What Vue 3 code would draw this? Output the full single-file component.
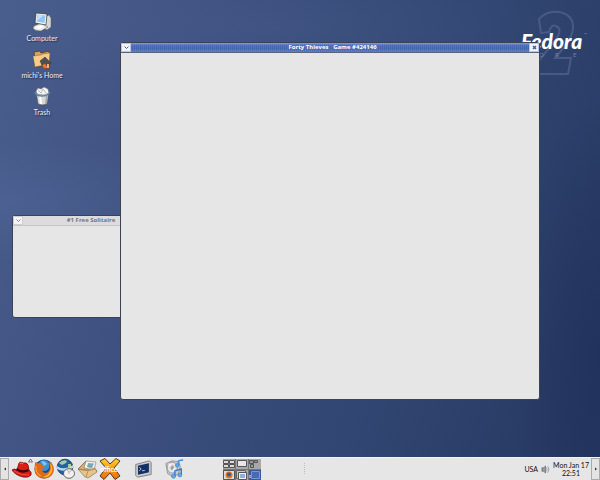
<script setup>
const emptyCells = ['grid', 'single', 'corner']
</script>

<template>
  <div class="screen">
    <main class="desktop">
      <svg class="brand" viewBox="0 0 90 80" role="img" aria-label="Fedora Core 2">
        <path d="M31 33 L29 19 Q37 10 49 12 Q64 15 63 29 Q62 38 51 51 L45 58 H61 L58 74 H29 V61 L46 39 Q53 29 46 26 Q41 24 39 32 Z" fill="none" stroke="#50638f" stroke-width="2" opacity=".75" />
        <text x="11" y="49" class="wordmark">Fedora</text>
        <text x="15" y="57" class="core">C</text>
        <text x="29" y="57" class="core">O</text>
        <text x="45" y="57" class="core">R</text>
        <text x="63" y="57" class="core">E</text>
        <text x="74" y="36" class="tm">™</text>
      </svg>

      <nav class="shortcuts" aria-label="Desktop">
        <a href="#computer" class="shortcut">
          <svg viewBox="0 0 20 20" aria-hidden="true">
            <path d="M12 5 L17 3 L19 6 V15 L15 18 L11 16 Z" fill="#d7d9d9" stroke="#555" stroke-width=".5" />
            <path d="M2 14 L9 11 L16 15 L9 19 Q2 19 1 16 Z" fill="#e8e8e4" stroke="#555" stroke-width=".5" />
            <path d="M4 1 L15 2 L14 13 L3 11 Z" fill="#f4f4f0" stroke="#333" stroke-width=".7" />
            <path d="M5.500 2.500 L13.500 3.500 L12.500 11 L4.500 9.500 Z" fill="#91c5f3" />
            <path d="M6 3 L11 3.500 L5 9 Z" fill="#c4e3ff" />
            <path d="M3 15 L9 13 L12 15 L7 17 Z" fill="#fff" />
          </svg>
          <span>Computer</span>
        </a>
        <a href="#home" class="shortcut">
          <svg viewBox="0 0 20 20" aria-hidden="true">
            <path d="M2 3 L8 2 L9 4 L17 2 L18 15 L4 18 Z" fill="#d9a258" stroke="#493822" stroke-width=".8" />
            <path d="M1 7 L9 6 L11 5 L18 4 L17 15 L3 18 Z" fill="#f5cc8a" stroke="#705426" stroke-width=".4" />
            <path d="M10 13 H17 V19 L12 20 L10 17 Z" fill="#e5762b" stroke="#713014" stroke-width=".6" />
            <path d="M8 12 L13 8 L19 14 L15 17 L13 14 L10 16 Z" fill="#505053" stroke="#333" stroke-width=".5" />
            <path d="M15 15 H17 V19 H15 Z" fill="#f9b064" />
          </svg>
          <span>michi's Home</span>
        </a>
        <a href="#trash" class="shortcut">
          <svg viewBox="0 0 20 20" aria-hidden="true">
            <path d="M4 6 L6 18 Q10 20 15 18 L17 6 Z" fill="#d8d9d8" stroke="#444" stroke-width=".6" />
            <path d="M7 9 L8 18 H10 L9 9 Z" fill="#fff" />
            <path d="M14 9 L13 18 L15 17 L16 9 Z" fill="#a9a9a9" />
            <path d="M4 5 L6 2 L9 3 L12 1 L16 3 L17 7 L12 9 L5 8 Z" fill="#f4f4f4" stroke="#666" stroke-width=".5" />
            <path d="M6 4 L9 7 L11 3 L14 7" fill="none" stroke="#aaa" stroke-width=".8" />
            <path d="M3 6 Q4 10 10 10 Q16 10 18 6" fill="none" stroke="#5f86a8" stroke-width="1.500" />
          </svg>
          <span>Trash</span>
        </a>
      </nav>

      <section class="window solitaire" aria-label="#1 Free Solitaire">
        <header class="titlebar">
          <button type="button" class="win-button" aria-label="Window menu">
            <svg viewBox="0 0 9 9" aria-hidden="true"><path d="M2.500 3.500 L4.500 5.500 L6.500 3.500" fill="none" stroke="currentColor" /></svg>
          </button>
          <h2>#1 Free Solitaire</h2>
          <button type="button" class="win-button" aria-label="Close">
            <svg viewBox="0 0 9 9" aria-hidden="true"><path d="M3 3 L6 6 M6 3 L3 6" fill="none" stroke="currentColor" stroke-width="1.500" /></svg>
          </button>
        </header>
      </section>

      <section class="window active thieves" aria-label="Forty Thieves">
        <header class="titlebar">
          <button type="button" class="win-button" aria-label="Window menu">
            <svg viewBox="0 0 9 9" aria-hidden="true"><path d="M2.500 3.500 L4.500 5.500 L6.500 3.500" fill="none" stroke="currentColor" /></svg>
          </button>
          <h1>Forty Thieves&nbsp;&nbsp; Game #424146</h1>
          <button type="button" class="win-button" aria-label="Close">
            <svg viewBox="0 0 9 9" aria-hidden="true"><path d="M3 3 L6 6 M6 3 L3 6" fill="none" stroke="currentColor" stroke-width="1.500" /></svg>
          </button>
        </header>
      </section>
    </main>

    <footer class="panel">
      <button type="button" class="hide" aria-label="Hide panel left">
        <svg viewBox="0 0 4 4" aria-hidden="true"><path d="M3 0.500 V3.500 L1 2 Z" fill="#333" /></svg>
      </button>

      <div class="launchers">
        <button type="button" class="launcher" aria-label="Main menu">
          <svg viewBox="0 0 22 22" aria-hidden="true">
            <path d="M1 12 Q3 10 6 12 L8 5 Q10 3 12 5 Q16 4 17 7 L18 12 Q21 14 20 17 Q18 20 12 19 Q4 17 1 12 Z" fill="#e21b17" stroke="#6f100e" stroke-width=".8" />
            <path d="M6 10 Q11 14 17 11 L18 13 Q11 17 5 12 Z" fill="#3a0c0c" />
            <path d="M9 6 Q10 4 12 6" fill="none" stroke="#ff685c" stroke-width="1.200" />
            <path d="M3 13 Q10 18 18 17" fill="none" stroke="#ff473c" />
            <path d="M17.500 4 L19.500 1 L21.500 4 Z" fill="#eee" stroke="#444" stroke-width=".7" />
          </svg>
        </button>
        <button type="button" class="launcher" aria-label="Firefox">
          <svg viewBox="0 0 22 22" aria-hidden="true">
            <circle cx="11" cy="11" r="9.500" fill="#174694" />
            <circle cx="11" cy="7.500" r="5.500" fill="#3c91d0" />
            <path d="M8 3 Q12 3 14 6 L11 8 Z" fill="#80c8ed" />
            <path d="M2 5 Q3 3 4 5 Q7 5 9 7 L12 9 L9 11 Q9 15 13 15 Q17 14 17 8 L16 3 Q22 7 20.500 14 Q18 21 10 20.500 Q1 19 1.500 10 Z" fill="#e36a15" />
            <path d="M17 5 Q22 11 17 17 Q14 20 10 19 Q17 17 18 10 Z" fill="#fdbb2d" />
            <path d="M3 8 Q2 15 8 18" fill="none" stroke="#ff9c2b" stroke-width="1.200" />
          </svg>
        </button>
        <button type="button" class="launcher" aria-label="Web browser">
          <svg viewBox="0 0 22 22" aria-hidden="true">
            <circle cx="10" cy="9" r="7.800" fill="#2462a6" stroke="#17324e" stroke-width=".8" />
            <path d="M4 5 Q8 1 12 3 L11 5 L7 7 Z M13 6 L16 6 L16 9 L13 10 Z" fill="#a5cf9a" />
            <path d="M2 8 Q8 13 18 7 L18 10 Q9 15 2 11 Z" fill="#b9d7ee" />
            <ellipse cx="14" cy="15.500" rx="5.500" ry="4.800" fill="#f1f1ee" stroke="#444" stroke-width=".8" />
            <path d="M12 12 L14 14 L17 12 M14 14 V16" fill="none" stroke="#999" stroke-width=".7" />
          </svg>
        </button>
        <button type="button" class="launcher" aria-label="Mail">
          <svg viewBox="0 0 22 22" aria-hidden="true">
            <path d="M1 11 L9 3 L20 13 L12 19 Z" fill="#d8ad72" stroke="#725830" stroke-width=".7" />
            <path d="M9 3 L19 4 L17 12 L7 10 Z" fill="#f4f5f2" stroke="#777" stroke-width=".6" />
            <path d="M11 5 L17 5.500 L15 10 L10 9 Z" fill="#76a8ca" />
            <path d="M10 9 L13 7 L15 10 Z" fill="#85a878" />
            <path d="M1 11 L10 12 L18 10 L20 14 L11 20 L8 19 Z" fill="#e7c48c" stroke="#8b6c3e" stroke-width=".6" />
            <path d="M1 11 Q11 14 18 11 M9 19 L11 13" fill="none" stroke="#a17c49" stroke-width=".7" />
          </svg>
        </button>
        <button type="button" class="launcher" aria-label="Office">
          <svg viewBox="0 0 22 22" aria-hidden="true">
            <defs>
              <linearGradient id="office-fill" x1="0" y1="0" x2="0" y2="1">
                <stop offset="0" stop-color="#ffd42a" />
                <stop offset="0.500" stop-color="#f79a14" />
                <stop offset="1" stop-color="#ec6a12" />
              </linearGradient>
            </defs>
            <path d="M1 3 L6 0.500 L11 6 L17 0.500 L21 3 L15 10 L21 18 L16 21.500 L11 15 L5 21.500 L1 18 L7 10 Z" fill="url(#office-fill)" stroke="#4a2a10" stroke-width=".9" />
            <text x="1" y="14" class="office-label">office</text>
          </svg>
        </button>
      </div>

      <button type="button" class="launcher terminal" aria-label="Terminal">
        <svg viewBox="0 0 22 22" aria-hidden="true">
          <path d="M3 6 L18 2 L20 4 V17 L5 20 L3 18 Z" fill="#c9cac7" stroke="#666" stroke-width=".8" />
          <path d="M5 7 L18 4 V15 L5 18 Z" fill="#142f62" stroke="#eee" stroke-width=".7" />
          <path d="M7 9 L9 11 L7 13 M10 13 L13 12.500" fill="none" stroke="#dfe8ff" stroke-width=".9" />
        </svg>
      </button>
      <button type="button" class="launcher music" aria-label="Music player">
        <svg viewBox="0 0 22 22" aria-hidden="true">
          <path d="M2 5 L9 2 L16 3 L18 8 L16 17 L9 19 L4 16 Z" fill="#c7c9c9" stroke="#777" stroke-width=".7" />
          <ellipse cx="9" cy="9.500" rx="5.500" ry="6" fill="#e6e6e6" stroke="#888" stroke-width=".8" />
          <ellipse cx="9" cy="9.500" rx="2" ry="2.500" fill="#9fa2a4" />
          <path d="M5 5 L8 8 M10 11 L13 14" stroke="#fff" stroke-width="1.200" />
          <path d="M16 7 V2 L21 1" fill="none" stroke="#4c98df" stroke-width="1.800" />
          <circle cx="14.500" cy="7" r="2" fill="#5faaf0" stroke="#2d669c" stroke-width=".5" />
          <path d="M12 19 V13 L19 11 V17" fill="none" stroke="#377fc8" stroke-width="1.600" />
          <circle cx="10.500" cy="19" r="2.200" fill="#5faaf0" stroke="#2d669c" stroke-width=".5" />
          <circle cx="17.500" cy="17.500" r="2.200" fill="#5faaf0" stroke="#2d669c" stroke-width=".5" />
        </svg>
      </button>

      <div class="pager" role="group" aria-label="Workspaces">
        <button v-for="(kind, i) in emptyCells" :key="kind" type="button" class="cell" :aria-label="`Workspace ${i + 1}`">
          <svg viewBox="0 0 12 10" aria-hidden="true">
            <path v-if="kind === 'grid'" d="M0.500 1.500 H5.500 V4.500 H0.500 Z M6.500 1.500 H11.500 V4.500 H6.500 Z M0.500 5.500 H5.500 V8.500 H0.500 Z M6.500 5.500 H11.500 V8.500 H6.500 Z" fill="#ddd" stroke="#555" />
            <path v-else-if="kind === 'single'" d="M1.500 1.500 H10.500 V7.500 H1.500 Z" fill="#e6e6e6" stroke="#555" />
            <path v-else d="M0.500 1.500 H4.500 V4.500 H0.500 Z M5.500 1.500 H8.500 V3.500 H5.500 Z M1.500 5.500 H4.500 V8.500 H1.500 Z" fill="#999" stroke="#555" />
          </svg>
        </button>
        <button type="button" class="cell" aria-label="Workspace 4">
          <svg viewBox="0 0 12 10" aria-hidden="true">
            <path d="M0.500 0.500 H11.500 V9.500 H0.500 Z" fill="#ddd" stroke="#555" />
            <circle cx="6" cy="5" r="3.500" fill="#e47621" /><circle cx="6" cy="4.500" r="2" fill="#285da3" />
          </svg>
        </button>
        <button type="button" class="cell" aria-label="Workspace 5">
          <svg viewBox="0 0 12 10" aria-hidden="true">
            <path d="M0.500 0.500 H9.500 V8.500 H0.500 Z" fill="#c8c8c8" stroke="#666" />
            <path d="M2.500 2.500 H10.500 V9.500 H2.500 Z" fill="#f2f2f2" stroke="#555" />
            <path d="M4 4 H9 V8 H4 Z" fill="#8fb0d8" />
          </svg>
        </button>
        <button type="button" class="cell current" aria-label="Workspace 6">
          <svg viewBox="0 0 12 10" aria-hidden="true">
            <path d="M0.500 5.500 H3 V7.500 H0.500 Z" fill="#5875b4" stroke="#cbd6ec" stroke-width=".7" />
            <path d="M2.500 1.500 H10.500 V8.500 H2.500 Z" fill="#4869b4" stroke="#7e95cc" />
          </svg>
        </button>
      </div>

      <div class="handle" aria-hidden="true"></div>

      <div class="tray">
        <span class="layout">USA</span>
        <button type="button" class="volume" aria-label="Volume">
          <svg viewBox="0 0 10 10" aria-hidden="true">
            <path d="M1 3 H3 L5 1 V9 L3 7 H1 Z" fill="#999" stroke="#555" stroke-width=".6" />
            <path d="M6 3 Q7.500 5 6 7 M7.500 1.500 Q10 5 7.500 8.500" fill="none" stroke="#8294aa" stroke-width=".9" />
          </svg>
        </button>
        <time class="clock" datetime="22:51">Mon Jan 17<br>22:51</time>
      </div>
      <button type="button" class="hide" aria-label="Hide panel right">
        <svg viewBox="0 0 4 4" aria-hidden="true"><path d="M1 0.500 V3.500 L3 2 Z" fill="#333" /></svg>
      </button>
    </footer>
  </div>
</template>

<style>
body {
  margin: 0;
}
</style>

<style scoped>
.screen {
  display: flex;
  flex-direction: column;
  min-height: 100vh;
  font-family: Lato, "Open Sans", sans-serif;
  font-size: 7px;
  line-height: 8px;
}

svg {
  display: block;
}

button {
  margin: 0;
  padding: 0;
  border: 0;
  background: none;
  font: inherit;
}

.desktop {
  position: relative;
  flex: 1;
  overflow: hidden;
  background:
    radial-gradient(ellipse 90px 260px at 100% 78%, rgba(20, 34, 76, 0.3), transparent),
    radial-gradient(ellipse 220px 60px at 0% 44%, rgba(90, 114, 164, 0.3), transparent),
    radial-gradient(ellipse 320px 60px at 45% 6%, rgba(84, 104, 150, 0.2), transparent),
    linear-gradient(108deg, #4a5e8d 0%, #3d5080 32%, #314672 65%, #263861 100%);
}

.brand {
  position: absolute;
  top: 0;
  right: 0;
  width: 90px;
  height: 80px;
}

.wordmark {
  font: italic 900 21px Lato, "Open Sans", sans-serif;
  fill: #fff;
}

.core {
  font-size: 6px;
  fill: #7383a8;
}

.tm {
  font-size: 4px;
  fill: #8291b3;
}

.shortcuts {
  display: flex;
  flex-direction: column;
  align-items: center;
  gap: 6px;
  width: 60px;
  padding: 12px;
}

.shortcut {
  display: flex;
  flex-direction: column;
  align-items: center;
  gap: 1px;
  color: #e9edf5;
  text-decoration: none;
  text-shadow: 1px 1px 1px #1e2b4c;
  line-height: 10px;
}

.shortcut svg {
  width: 20px;
  height: 20px;
}

.window {
  position: absolute;
  box-sizing: border-box;
  border: 1px solid #3b4254;
  border-radius: 3px;
  background: #e6e6e6;
  overflow: hidden;
}

.solitaire {
  top: 215px;
  left: 12px;
  width: 158px;
  height: 103px;
}

.thieves {
  inset: 42px 60px 57px 120px;
}

.titlebar {
  display: flex;
  align-items: center;
  height: 9px;
  border-bottom: 1px solid #c6c4c6;
  background: #dedbdf;
  color: #777;
}

.titlebar h1,
.titlebar h2 {
  flex: 1;
  margin: 0;
  font-family: "Open Sans", "Noto Sans", sans-serif;
  font-size: 6px;
  line-height: 9px;
  font-weight: 700;
  text-align: center;
  white-space: nowrap;
}

.titlebar h1 {
  padding-left: 5px;
}

.active .titlebar {
  border-color: #59647c;
  background:
    repeating-linear-gradient(90deg, rgba(255, 255, 255, 0.08) 0 1px, transparent 1px 2px),
    linear-gradient(#7f9ad6, #4b6bb8 25%, #4363ae 60%, #5878c2);
  color: #fff;
}

.win-button {
  display: flex;
  align-items: center;
  justify-content: center;
  width: 10px;
  height: 9px;
  background: #f5f5f5;
  box-shadow: inset 0 0 0 1px #d0ced2;
  color: #888;
}

.win-button svg {
  width: 9px;
  height: 9px;
}

.active .win-button {
  background: #f2f4fb;
  box-shadow: inset 0 0 0 1px #b9c5e4;
  color: #4a5c94;
}

.panel {
  display: flex;
  align-items: center;
  box-sizing: border-box;
  height: 23px;
  border-top: 1px solid #f4f4f4;
  background: #e6e6e6;
  color: #111;
}

.hide {
  display: flex;
  align-items: center;
  justify-content: center;
  align-self: stretch;
  box-sizing: border-box;
  width: 9px;
  border: 1px solid #aaa;
  background: #e4e4e4;
}

.hide svg {
  width: 4px;
  height: 4px;
}

.launchers {
  display: flex;
  padding-left: 2px;
}

.launcher svg {
  width: 22px;
  height: 22px;
}

.office-label {
  font-size: 7px;
  font-weight: 700;
  fill: #fff;
}

.terminal svg,
.music svg {
  width: 20px;
  height: 20px;
}

.terminal {
  margin-left: 12px;
}

.music {
  margin-left: 11px;
}

.pager {
  display: grid;
  grid-template-columns: repeat(3, 12px);
  gap: 1px;
  margin-left: 39px;
  background: #777;
}

.cell {
  height: 10px;
  background: #a8a8a8;
}

.cell svg {
  width: 12px;
  height: 10px;
}

.current {
  background: #3a589b;
}

.handle {
  width: 1px;
  height: 12px;
  margin-left: 43px;
  background: repeating-linear-gradient(#bbb 0 1px, transparent 1px 2px);
}

.tray {
  display: flex;
  align-items: center;
  gap: 3px;
  margin-left: auto;
  padding-right: 2px;
}

.volume svg {
  width: 9px;
  height: 9px;
}

.clock {
  text-align: center;
  white-space: nowrap;
}
</style>
